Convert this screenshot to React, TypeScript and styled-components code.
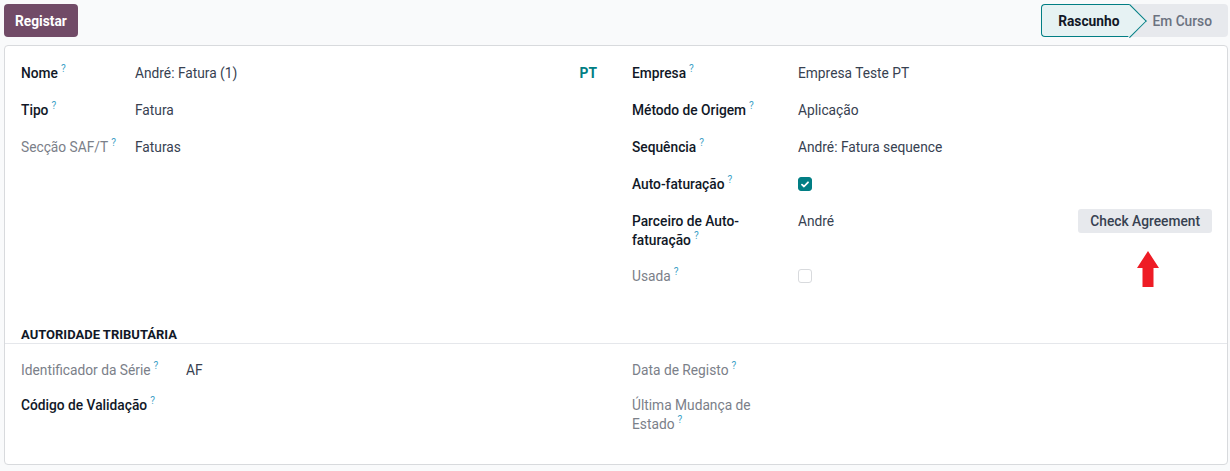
import React from "react";
import styled, { createGlobalStyle } from "styled-components";

const FONT = `Roboto, "Noto Sans", "Liberation Sans", sans-serif`;

const Global = createGlobalStyle`
  html, body { margin: 0; padding: 0; background: #f9fafb; }
  body { font-family: ${FONT}; font-size: 13.75px; color: #374151; }
  * { box-sizing: border-box; }
`;

const Page = styled.div`
  padding: 4px 2px 6px 4px;
  display: flex;
  flex-direction: column;
  gap: 8px;
`;

const ControlPanel = styled.div`
  display: flex;
  align-items: center;
  justify-content: space-between;
  height: 33px;
`;

const PrimaryButton = styled.button`
  height: 33px;
  padding: 0 11px;
  border: none;
  border-radius: 4px;
  background: #714b67;
  color: #fff;
  font-family: ${FONT};
  font-size: 13.75px;
  font-weight: 700;
`;

const StatusBar = styled.div`
  display: flex;
  height: 33px;
`;

const StatusStep = styled.div<{ $active?: boolean }>`
  position: relative;
  display: flex;
  align-items: center;
  height: 33px;
  font-weight: ${(p) => (p.$active ? 700 : 500)};
  color: ${(p) => (p.$active ? "#111827" : "#6b7280")};
  background: ${(p) => (p.$active ? "#e6f2f3" : "#e7e9ed")};
  ${(p) =>
    p.$active
      ? `
    z-index: 1;
    padding: 0 11px 0 16px;
    border: 1px solid #017e84;
    border-right: none;
    border-radius: 4px 0 0 4px;
    &::after {
      content: "";
      position: absolute;
      right: -11px;
      top: 4px;
      width: 22.6px;
      height: 22.6px;
      background: #e6f2f3;
      border-top: 1px solid #017e84;
      border-right: 1px solid #017e84;
      transform: rotate(45deg);
    }
  `
      : `
    padding: 0 16px 0 22px;
    border-radius: 0 4px 4px 0;
  `}
`;

const StepText = styled.span`
  position: relative;
  z-index: 2;
`;

const Sheet = styled.div`
  background: #fff;
  border: 1px solid #d8dadd;
  border-radius: 4px;
  padding: 17px 0 30px;
`;

const Columns = styled.div`
  display: grid;
  grid-template-columns: 1fr 1fr;
`;

const Group = styled.div<{ $labelWidth: number; $rowGap: number }>`
  display: grid;
  grid-template-columns: ${(p) => p.$labelWidth}px 1fr;
  row-gap: ${(p) => p.$rowGap}px;
  align-content: start;
  padding: 0 15px 0 16px;
`;

const Label = styled.div<{ $muted?: boolean }>`
  line-height: 19px;
  padding-top: 1px;
  min-height: 21px;
  font-weight: ${(p) => (p.$muted ? 400 : 500)};
  color: ${(p) => (p.$muted ? "#7b8089" : "#111827")};
  padding-right: 12px;
`;

const Help = styled.sup`
  font-size: 10px;
  font-weight: 400;
  color: #3d9fc6;
  margin-left: 3px;
  vertical-align: 6px;
  line-height: 0;
`;

const Value = styled.div`
  line-height: 19px;
  padding-top: 1px;
  min-height: 21px;
  color: #374151;
  display: flex;
  align-items: flex-start;
  justify-content: space-between;
`;

const Tag = styled.span`
  color: #017e84;
  font-weight: 700;
  margin-right: 4px;
`;

const Checkbox = styled.span<{ $checked?: boolean }>`
  display: inline-flex;
  align-items: center;
  justify-content: center;
  width: 14px;
  height: 14px;
  margin-top: 2px;
  border-radius: 3px;
  background: ${(p) => (p.$checked ? "#017e84" : "#fff")};
  border: 1px solid ${(p) => (p.$checked ? "#017e84" : "#d8dadd")};
`;

const ButtonWrap = styled.div`
  position: relative;
  margin-top: -3px;
`;

const SecondaryButton = styled.button`
  height: 24px;
  padding: 0 12px;
  border: none;
  border-radius: 3px;
  background: #e7e9ed;
  color: #374151;
  font-family: ${FONT};
  font-size: 13.75px;
  font-weight: 500;
`;

const Arrow = styled.svg`
  position: absolute;
  top: calc(100% + 18px);
  left: calc(50% + 3px);
  transform: translateX(-50%);
`;

const SectionTitle = styled.div`
  margin-top: 39px;
  padding: 0 16px 0;
  line-height: 17px;
  font-size: 13px;
  font-weight: 700;
  color: #111827;
  text-transform: uppercase;
  border-bottom: 1px solid #e5e7eb;
`;

const BottomColumns = styled(Columns)`
  margin-top: 16px;
`;

type FieldProps = {
  label: React.ReactNode;
  help?: boolean;
  muted?: boolean;
  children?: React.ReactNode;
};

const Field = ({ label, help = true, muted, children }: FieldProps) => (
  <>
    <Label $muted={muted}>
      {label}
      {help && <Help>?</Help>}
    </Label>
    <Value>{children}</Value>
  </>
);

const Check = () => (
  <svg width="8" height="7" viewBox="0 0 8 7">
    <path d="M1 3.6 L3 5.5 L7 1.3" fill="none" stroke="#fff" strokeWidth="1.8" strokeLinecap="round" strokeLinejoin="round" />
  </svg>
);

export default function App() {
  return (
    <>
      <Global />
      <Page>
        <ControlPanel>
          <PrimaryButton>Registar</PrimaryButton>
          <StatusBar>
            <StatusStep $active>
              <StepText>Rascunho</StepText>
            </StatusStep>
            <StatusStep>
              <StepText>Em Curso</StepText>
            </StatusStep>
          </StatusBar>
        </ControlPanel>
        <Sheet>
          <Columns>
            <Group $labelWidth={114} $rowGap={16}>
              <Field label="Nome">
                <span>André: Fatura (1)</span>
                <Tag>PT</Tag>
              </Field>
              <Field label="Tipo">Fatura</Field>
              <Field label="Secção SAF/T" muted>
                Faturas
              </Field>
            </Group>
            <Group $labelWidth={166} $rowGap={16}>
              <Field label="Empresa">Empresa Teste PT</Field>
              <Field label="Método de Origem">Aplicação</Field>
              <Field label="Sequência">André: Fatura sequence</Field>
              <Field label="Auto-faturação">
                <Checkbox $checked>
                  <Check />
                </Checkbox>
              </Field>
              <Field label={<>Parceiro de Auto-<br />faturação</>}>
                <span>André</span>
                <ButtonWrap>
                  <SecondaryButton>Check Agreement</SecondaryButton>
                  <Arrow width="22" height="36" viewBox="0 0 22 36">
                    <polygon points="11,0 22,17 16.5,17 16.5,36 5.5,36 5.5,17 0,17" fill="#ee1c25" />
                  </Arrow>
                </ButtonWrap>
              </Field>
              <Field label="Usada" muted>
                <Checkbox />
              </Field>
            </Group>
          </Columns>
          <SectionTitle>Autoridade Tributária</SectionTitle>
          <BottomColumns>
            <Group $labelWidth={165} $rowGap={14}>
              <Field label="Identificador da Série" muted>
                AF
              </Field>
              <Field label="Código de Validação" />
            </Group>
            <Group $labelWidth={166} $rowGap={14}>
              <Field label="Data de Registo" muted />
              <Field label={<>Última Mudança de<br />Estado</>} muted />
            </Group>
          </BottomColumns>
        </Sheet>
      </Page>
    </>
  );
}
